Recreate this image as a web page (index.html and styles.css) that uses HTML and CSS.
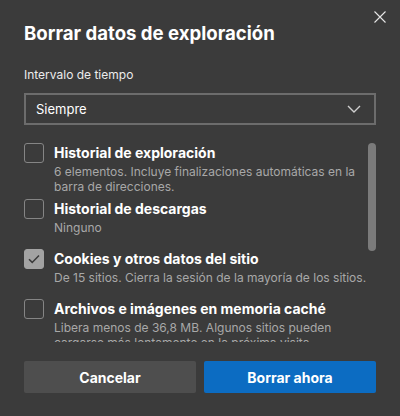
FILE: index.html
```html
<!DOCTYPE html>
<html lang="es">
<head>
<meta charset="utf-8">
<link rel="stylesheet" href="styles.css">
</head>
<body>
<div class="dialog">
  <button class="close" aria-label="Cerrar">
    <svg width="12" height="12" viewBox="0 0 12 12"><path d="M0.5 0.5L11.5 11.5M11.5 0.5L0.5 11.5" stroke="#e6e6e6" stroke-width="1.1" fill="none"/></svg>
  </button>
  <h1 class="title">Borrar datos de exploración</h1>
  <div class="label">Intervalo de tiempo</div>
  <div class="select">
    <span>Siempre</span>
    <svg class="chev" width="14" height="8" viewBox="0 0 14 8"><path d="M1 1L7 7L13 1" stroke="#cfcfcf" stroke-width="1.4" fill="none"/></svg>
  </div>
  <div class="listwrap">
    <div class="list">
      <div class="item">
        <span class="box"></span>
        <div class="text">
          <div class="name">Historial de exploración</div>
          <div class="desc">6 elementos. Incluye finalizaciones automáticas en la barra de direcciones.</div>
        </div>
      </div>
      <div class="item">
        <span class="box"></span>
        <div class="text">
          <div class="name">Historial de descargas</div>
          <div class="desc">Ninguno</div>
        </div>
      </div>
      <div class="item">
        <span class="box checked">
          <svg width="12" height="10" viewBox="0 0 12 10"><path d="M1 5.2L4.2 8.4L11 1.4" stroke="#3a3a3a" stroke-width="1.5" fill="none"/></svg>
        </span>
        <div class="text">
          <div class="name">Cookies y otros datos del sitio</div>
          <div class="desc">De 15 sitios. Cierra la sesión de la mayoría de los sitios.</div>
        </div>
      </div>
      <div class="item">
        <span class="box"></span>
        <div class="text">
          <div class="name">Archivos e imágenes en memoria caché</div>
          <div class="desc">Libera menos de 36,8 MB. Algunos sitios pueden cargarse más lentamente en la próxima visita.</div>
        </div>
      </div>
    </div>
    <div class="track"><div class="thumb"></div></div>
  </div>
  <div class="buttons">
    <button class="btn cancel">Cancelar</button>
    <button class="btn primary">Borrar ahora</button>
  </div>
</div>
</body>
</html>
```
FILE: styles.css
```css
html, body {
  margin: 0;
  padding: 0;
  background: #3b3b3b;
}
body {
  font-family: Inter, "Noto Sans", "Liberation Sans", sans-serif;
  color: #ffffff;
}
.dialog {
  position: relative;
  width: 400px;
  height: 416px;
  box-sizing: border-box;
  padding: 21px 24px 0 24px;
}
.close {
  position: absolute;
  top: 11px;
  left: 374px;
  width: 12px;
  height: 12px;
  padding: 0;
  border: 0;
  background: none;
  display: block;
}
.close svg { display: block; }
.title {
  margin: 0;
  font-size: 18.6px;
  line-height: 24px;
  font-weight: 700;
  letter-spacing: 0;
}
.label {
  margin-top: 22px;
  font-size: 12px;
  line-height: 15px;
  color: #ececec;
}
.select {
  margin-top: 11px;
  height: 32px;
  box-sizing: border-box;
  border: 2px solid #6c6c6c;
  display: flex;
  align-items: center;
  justify-content: space-between;
  padding: 0 13px 0 10px;
  font-size: 13px;
  color: #ffffff;
}
.chev { display: block; }
.listwrap {
  margin-top: 18px;
  height: 199px;
  display: flex;
  overflow: hidden;
}
.list {
  width: 344px;
  overflow: hidden;
}
.item {
  display: flex;
  gap: 10px;
  min-height: 45px;
  margin-bottom: 5px;
}
.box {
  flex: none;
  width: 20px;
  height: 20px;
  box-sizing: border-box;
  border: 1px solid #858585;
  border-radius: 3px;
  display: flex;
  align-items: center;
  justify-content: center;
}
.box.checked {
  background: #a3a3a3;
  border-color: #a3a3a3;
}
.box svg { display: block; }
.text { flex: 1; }
.name {
  font-size: 14px;
  line-height: 20px;
  font-weight: 700;
  color: #ffffff;
}
.desc {
  padding-top: 1px;
  font-size: 12px;
  line-height: 15px;
  color: #a8a8a8;
}
.track {
  width: 8px;
}
.thumb {
  width: 8px;
  height: 108px;
  border-radius: 4px;
  background: #7b7b7b;
}
.buttons {
  margin-top: 19px;
  display: flex;
  gap: 8px;
}
.btn {
  flex: 1;
  height: 32px;
  border: 0;
  border-radius: 2px;
  font-family: inherit;
  font-size: 14px;
  font-weight: 700;
  color: #ffffff;
}
.cancel { background: #4e4e4e; }
.primary { background: #0c6cc2; }
```
